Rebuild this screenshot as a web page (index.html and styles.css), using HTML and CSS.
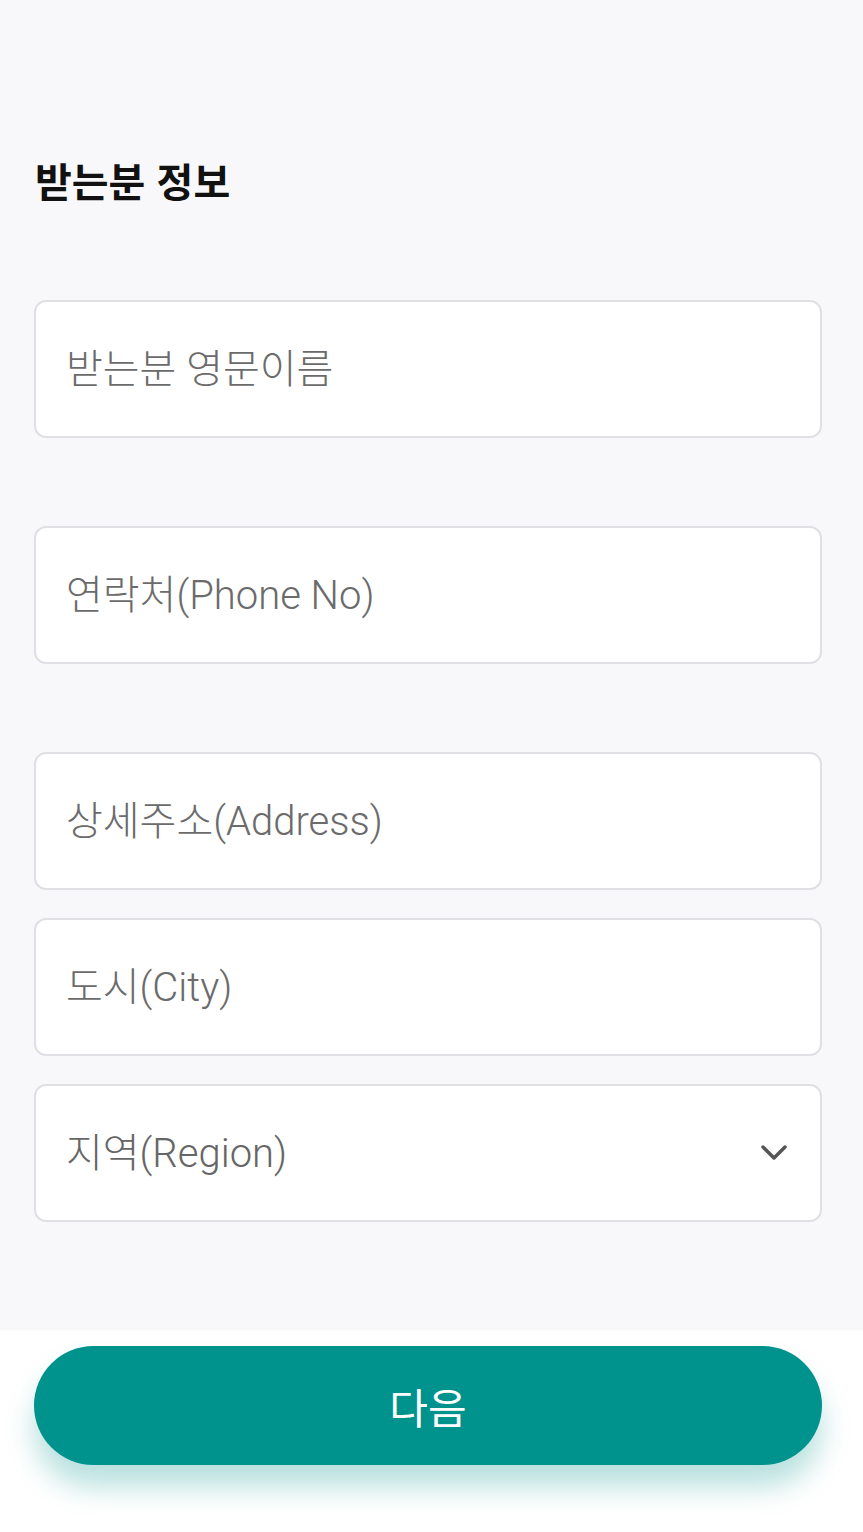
FILE: index.html
```html
<!DOCTYPE html>
<html lang="ko">
<head>
    <meta charset="UTF-8">
    <meta name="viewport" content="width=device-width, initial-scale=1.0">
    <title>받는분 정보</title>
    <link rel="stylesheet" href="styles.css">
</head>
<body>
    <div class="page">
        <main class="form">
            <h1 class="title">받는분 정보</h1>

            <!-- 이름 -->
            <div class="group">
                <input class="field" type="text" placeholder="받는분 영문이름">
            </div>

            <!-- 연락처 -->
            <div class="group">
                <input class="field" type="tel" placeholder="연락처(Phone No)">
            </div>

            <!-- 주소 -->
            <div class="group address">
                <input class="field" type="text" placeholder="상세주소(Address)">
                <input class="field" type="text" placeholder="도시(City)">
                <div class="select-wrap">
                    <select class="field select">
                        <option value="">지역(Region)</option>
                    </select>
                    <svg class="chevron" width="28" height="18" viewBox="0 0 28 18">
                        <path d="M3 3 L14 14 L25 3" fill="none" stroke="#555" stroke-width="3.5" stroke-linecap="round" stroke-linejoin="round"/>
                    </svg>
                </div>
            </div>
        </main>

        <footer class="footer">
            <button class="next">다음</button>
        </footer>
    </div>
</body>
</html>
```

FILE: styles.css
```css
body {
    margin: 0;
    font-family: "Roboto", "Noto Sans CJK KR", sans-serif;
    background: #fff;
}
.page {
    min-height: 1532px;
    display: flex;
    flex-direction: column;
}
.form {
    background: #f8f8fa;
    padding: 150px 41px 0 34px;
    height: 1180px;
}
.title {
    margin: 0 0 90px 1px;
    font-size: 40px;
    font-weight: 700;
    color: #111;
    line-height: 60px;
    font-family: "Noto Sans CJK KR", sans-serif;
}
.group {
    margin-bottom: 88px;
}
.address {
    display: flex;
    flex-direction: column;
    gap: 28px;
}
.field {
    display: block;
    box-sizing: border-box;
    width: 100%;
    height: 138px;
    padding: 0 30px;
    border: 2px solid #e0e0e4;
    border-radius: 12px;
    background: #fff;
    font-family: "Roboto", "Noto Sans CJK KR", sans-serif;
    font-size: 40px;
    font-weight: 300;
    color: #666;
    outline: none;
}
.field::placeholder {
    color: #6b6b6b;
}
.select-wrap {
    position: relative;
}
.select {
    appearance: none;
    -webkit-appearance: none;
}
.chevron {
    position: absolute;
    right: 34px;
    top: 60px;
}
.footer {
    flex: 1;
    background: #fff;
    padding: 16px 41px 0 34px;
}
.next {
    display: block;
    width: 100%;
    height: 119px;
    border: none;
    border-radius: 60px;
    background: #00938d;
    color: #fff;
    font-family: "Noto Sans CJK KR", sans-serif;
    font-size: 42px;
    font-weight: 400;
    box-shadow: 0 22px 28px rgba(0, 147, 141, 0.28);
    cursor: pointer;
}
```
